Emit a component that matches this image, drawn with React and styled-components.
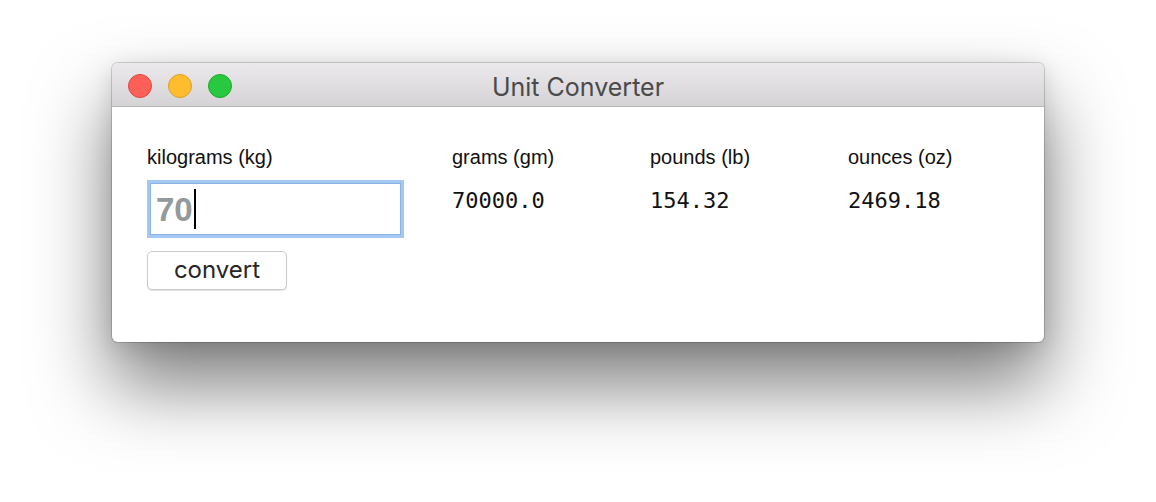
import styled, { createGlobalStyle } from "styled-components";

const GlobalStyle = createGlobalStyle`
  html, body {
    margin: 0;
    padding: 0;
    background: #ffffff;
  }
`;

const units = [
  { id: "gm", label: "grams (gm)", value: "70000.0" },
  { id: "lb", label: "pounds (lb)", value: "154.32" },
  { id: "oz", label: "ounces (oz)", value: "2469.18" },
];

const lights = ["#fe5f57", "#febc2e", "#28c840"];
const lightBorders = ["#e0443e", "#dea123", "#1aab29"];

export default function App() {
  return (
    <Page>
      <GlobalStyle />
      <Window>
        <TitleBar>
          <Lights>
            {lights.map((c, i) => (
              <Light key={c} $color={c} $border={lightBorders[i]} />
            ))}
          </Lights>
          <Title>Unit Converter</Title>
        </TitleBar>
        <Content>
          <InputColumn>
            <Label>kilograms (kg)</Label>
            <Field>
              <FieldText>70</FieldText>
              <Caret />
            </Field>
            <Button>convert</Button>
          </InputColumn>
          {units.map((u) => (
            <OutputColumn key={u.id}>
              <Label>{u.label}</Label>
              <Value>{u.value}</Value>
            </OutputColumn>
          ))}
        </Content>
      </Window>
    </Page>
  );
}

const Page = styled.div`
  width: 1156px;
  height: 502px;
  display: flex;
  justify-content: center;
  align-items: flex-start;
  padding-top: 63px;
  box-sizing: border-box;
  overflow: hidden;
`;

const Window = styled.div`
  width: 932px;
  height: 279px;
  background: #ffffff;
  border-radius: 6px;
  overflow: hidden;
  display: flex;
  flex-direction: column;
  box-shadow: 0 0 0 1px rgba(0, 0, 0, 0.16), 0 4px 22px rgba(0, 0, 0, 0.12),
    0 42px 76px 2px rgba(0, 0, 0, 0.5);
`;

const TitleBar = styled.div`
  position: relative;
  height: 44px;
  flex-shrink: 0;
  display: flex;
  align-items: center;
  justify-content: center;
  background: linear-gradient(#ebe9eb, #d5d3d5);
  border-bottom: 1px solid #b9b7b9;
  box-sizing: border-box;
`;

const Lights = styled.div`
  position: absolute;
  left: 16px;
  top: 11px;
  display: flex;
  gap: 16px;
`;

const Light = styled.span`
  width: 24px;
  height: 24px;
  border-radius: 50%;
  box-sizing: border-box;
  background: ${(p) => p.$color};
  border: 1px solid ${(p) => p.$border};
`;

const Title = styled.div`
  font-family: Inter, "Liberation Sans", sans-serif;
  font-size: 25px;
  color: #4a4a4a;
  margin-top: 4px;
`;

const Content = styled.div`
  display: grid;
  grid-template-columns: 305px 198px 198px 1fr;
  padding: 38px 0 0 35px;
`;

const InputColumn = styled.div`
  display: flex;
  flex-direction: column;
  align-items: flex-start;
`;

const OutputColumn = styled.div`
  display: flex;
  flex-direction: column;
`;

const Label = styled.div`
  font-family: "Liberation Sans", Arial, sans-serif;
  font-size: 20px;
  line-height: 24px;
  color: #111;
`;

const Field = styled.div`
  margin-top: 11px;
  width: 257px;
  height: 58px;
  box-sizing: border-box;
  border: 3px solid #a4c7f3;
  box-shadow: inset 0 0 0 1px #8bb3e4;
  display: flex;
  align-items: center;
  padding-left: 6px;
`;

const FieldText = styled.span`
  font-family: "Liberation Sans", Arial, sans-serif;
  font-weight: bold;
  font-size: 33px;
  color: #939a9b;
  margin-top: 2px;
`;

const Caret = styled.span`
  width: 2px;
  height: 40px;
  background: #000;
  margin-left: 1px;
`;

const Button = styled.button`
  margin-top: 13px;
  width: 140px;
  height: 39px;
  border: 1px solid #cbcbcb;
  border-radius: 5px;
  background: #ffffff;
  box-shadow: 0 1px 1px rgba(0, 0, 0, 0.12);
  font-family: Inter, "Liberation Sans", sans-serif;
  font-size: 24px;
  color: #262626;
  padding: 0 0 2px;
`;

const Value = styled.div`
  margin-top: 19px;
  font-family: "DejaVu Sans Mono", "Liberation Mono", monospace;
  font-size: 22px;
  line-height: 26px;
  color: #111;
`;
